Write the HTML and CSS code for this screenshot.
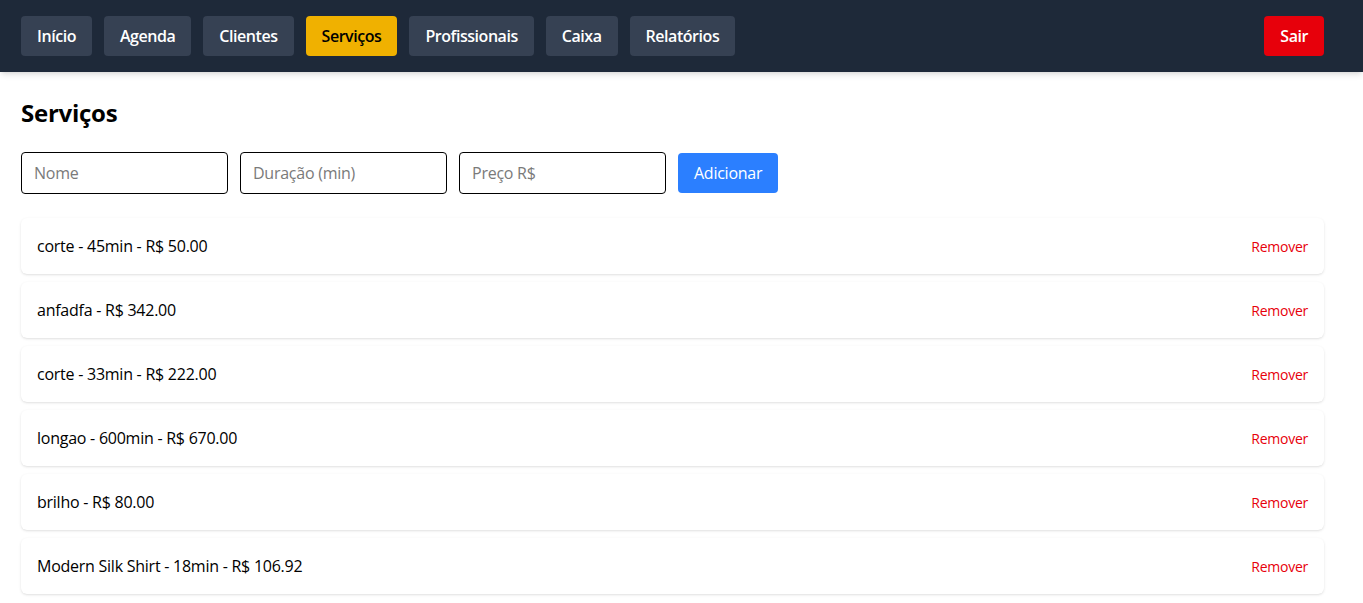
FILE: index.html
```html
<!DOCTYPE html>
<html lang="pt-BR">
<head>
<meta charset="utf-8">
<title>Serviços</title>
<link rel="stylesheet" href="styles.css">
</head>
<body>
<nav class="topbar">
  <div class="nav-group">
    <button class="nav-btn">Início</button>
    <button class="nav-btn">Agenda</button>
    <button class="nav-btn">Clientes</button>
    <button class="nav-btn active">Serviços</button>
    <button class="nav-btn">Profissionais</button>
    <button class="nav-btn">Caixa</button>
    <button class="nav-btn">Relatórios</button>
  </div>
  <button class="logout">Sair</button>
</nav>
<main class="content">
  <h1 class="title">Serviços</h1>
  <div class="form-row">
    <input class="field" type="text" placeholder="Nome">
    <input class="field" type="text" placeholder="Duração (min)">
    <input class="field" type="text" placeholder="Preço R$">
    <button class="add-btn">Adicionar</button>
  </div>
  <ul class="list">
    <li class="card"><span>corte - 45min - R$ 50.00</span><button class="remove">Remover</button></li>
    <li class="card"><span>anfadfa - R$ 342.00</span><button class="remove">Remover</button></li>
    <li class="card"><span>corte - 33min - R$ 222.00</span><button class="remove">Remover</button></li>
    <li class="card"><span>longao - 600min - R$ 670.00</span><button class="remove">Remover</button></li>
    <li class="card"><span>brilho - R$ 80.00</span><button class="remove">Remover</button></li>
    <li class="card"><span>Modern Silk Shirt - 18min - R$ 106.92</span><button class="remove">Remover</button></li>
  </ul>
</main>
</body>
</html>
```
FILE: styles.css
```css
* { box-sizing: border-box; }
html, body { margin: 0; padding: 0; }
body {
  font-family: "Open Sans", "Noto Sans", sans-serif;
  font-size: 16px;
  line-height: 24px;
  color: #000;
  background: #fff;
  letter-spacing: -0.25px;
}
button, input { font-family: inherit; font-size: 16px; letter-spacing: inherit; }
.topbar {
  height: 72px;
  background: #1e2939;
  display: flex;
  align-items: center;
  justify-content: space-between;
  padding: 0 39px 0 21px;
  box-shadow: 0 4px 6px -1px rgba(0,0,0,0.1), 0 2px 4px -2px rgba(0,0,0,0.1);
  position: relative;
}
.nav-group { display: flex; gap: 12px; }
.nav-btn {
  height: 40px;
  padding: 0 16px;
  border: 0;
  border-radius: 4px;
  background: #364153;
  color: #fff;
  font-weight: 600;
  letter-spacing: -0.45px;
  cursor: pointer;
}
.nav-btn.active { background: #f0b100; color: #000; }
.logout {
  height: 40px;
  padding: 0 16px;
  border: 0;
  border-radius: 4px;
  background: #e7000b;
  color: #fff;
  font-weight: 600;
  letter-spacing: -0.45px;
}
.content { padding: 25px 39px 40px 21px; }
.title {
  margin: 0 0 23px;
  font-size: 24px;
  line-height: 32px;
  font-weight: 700;
}
.form-row { display: flex; align-items: center; gap: 12px; margin-bottom: 24px; }
.field {
  width: 207px;
  height: 42px;
  padding: 0 12px;
  border: 1px solid #000;
  border-radius: 4px;
  color: #000;
  background: #fff;
}
.field::placeholder { color: #7a7a7a; }
.add-btn {
  height: 40px;
  padding: 0 16px;
  border: 0;
  border-radius: 4px;
  background: #2b7fff;
  color: #fff;
}
.list { list-style: none; margin: 0; padding: 0; display: flex; flex-direction: column; gap: 8px; }
.card {
  height: 56px;
  padding: 0 16px;
  display: flex;
  align-items: center;
  justify-content: space-between;
  background: #fff;
  border-radius: 6px;
  box-shadow: 0 1px 3px rgba(0,0,0,0.1), 0 1px 2px -1px rgba(0,0,0,0.1);
}
.remove {
  border: 0;
  background: none;
  padding: 0;
  color: #e7000b;
  font-size: 14px;
}
```
